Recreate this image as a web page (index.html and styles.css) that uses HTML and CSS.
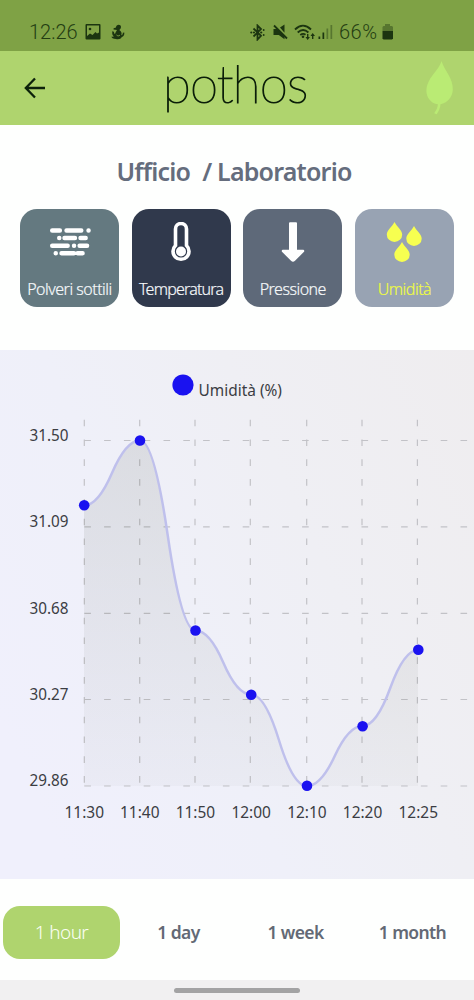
FILE: index.html
```html
<!DOCTYPE html>
<html lang="it">
<head>
    <meta charset="UTF-8">
    <meta name="viewport" content="width=device-width, initial-scale=1.0">
    <title>Pothos</title>
    <link rel="stylesheet" href="styles.css">
</head>
<body>

<div class="status-bar">
    <span class="clock">12:26</span>
    <svg class="icon-picture" width="16" height="16" viewBox="0 0 16 16">
        <path fill-rule="evenodd" d="M1.500 0h13a1 1 0 0 1 1 1v13.500a1 1 0 0 1-1 1h-13a1 1 0 0 1-1-1V1a1 1 0 0 1 1-1zM2 1.500v10.500l3-2.500 2.500 1.500L10.500 8l1.500 1.500L14 8.500V1.500z"/>
        <circle cx="5" cy="5" r="1.300"/>
    </svg>
    <svg class="icon-figure" width="14" height="16" viewBox="0 0 14 16">
        <path d="M5 3.500C5 0 10 0 10 3c0 2-1.600 2.300-1.500 3.200 2 1 2.500 3 1.800 5 1-.2 1.600-1 1.500-2.500l1.500-.2c.3 2.500-.8 4-2.500 4.500C10 15 7.500 15.500 5 15c-3 0-4.500-1-4.500-2.500 1 .3 1.700.2 2.500-.2C1.300 11.500.8 9.500 1.500 7L3 8c0 1 .3 1.700 1 2C4.500 8 5.500 7 6 6L2.500 5.500 2.600 4.300z"/>
        <path class="gap" d="M5.500 11c1.500 1.300 2.500 1 3.500 0"/>
    </svg>
    <div class="status-right">
        <svg width="15" height="17" viewBox="0 0 15 17">
            <path class="line" d="M3.500 4.500l7.500 7.300-3.500 3.700v-14L11 5l-7.500 7.500"/>
            <circle cx="1.300" cy="8.500" r="1.100"/>
            <circle cx="4" cy="8.500" r="1.100"/>
            <circle cx="11.200" cy="8.500" r="1.100"/>
            <circle cx="13.700" cy="6" r=".9"/>
            <circle cx="13.700" cy="11" r=".9"/>
        </svg>
        <svg class="icon-mute" width="15" height="16" viewBox="0 0 15 16">
            <path d="M.5 5h4l7 7v3.300L5.800 11H.5zM7 3.500L11.500.5v8.300z"/>
            <path class="line" d="M1 1.500l13 13"/>
        </svg>
        <svg class="icon-wifi" width="22" height="17" viewBox="0 0 22 17">
            <path class="line" d="M1 5.500c5-5 11-5 16 0M3.700 8.500c3.500-3.300 7.300-3.300 10.700 0M6.300 11c2-1.600 3.500-1.600 5.200-.3"/>
            <circle cx="9" cy="12.700" r="1.300"/>
            <path d="M13 10h1.400v3h1.500L13.700 16l-2.200-3H13zM18 15h1.400v-3H21L18.700 9l-2.200 3H18z"/>
        </svg>
        <svg class="icon-signal" width="15" height="16" viewBox="0 0 15 16">
            <path d="M.5 12.500h1.700V15H.5zM4.500 8.500h1.700V15H4.500z"/>
            <path class="dim" d="M8.500 4.500h1.700V15H8.500zM12.500 1h1.700v14h-1.700z"/>
        </svg>
        <span class="percent">66%</span>
        <svg class="icon-battery" width="12" height="16" viewBox="0 0 12 16">
            <path class="dim" d="M3 0h5v2h2l1 1v4H.5V3l1-1H3z"/>
            <path d="M.5 7H11v7.500l-1 1H1.500l-1-1z"/>
        </svg>
    </div>
</div>

<header class="header">
    <svg class="back" width="22" height="22" viewBox="0 0 22 22">
        <path d="M21 11H2M11 1.500L1.800 11l9.200 9.500"/>
    </svg>
    <h1 class="logo">pothos</h1>
    <svg class="leaf" width="28" height="54" viewBox="0 0 28 54">
        <path d="M15.500 0c2.500 9 12 17 11.300 29-.3 7-5.500 13-12.300 14.200-.2 4-2 7-3.800 10l-2.500-1c2-3 3.500-5.500 3.700-9C4.500 42.500.5 36 .4 30 1 16 12.500 10.500 15.500 0z"/>
    </svg>
</header>

<section class="sensors">
    <h2 class="room"><span>Ufficio</span> <span>/ Laboratorio</span></h2>
    <div class="cards">
        <div class="card dust">
            <svg width="42" height="42" viewBox="0 0 42 42">
                <path class="dust-line" d="M3.200 8.500h7.700M17.500 8.500h14.800M39.500 8.500h.1M10.200 16h.1M15.500 16H26M31.500 16h5.200M3.200 23.800h15.500M25 23.800h.1M30.600 23.800h7.500M6.700 31.200h.1M12.500 31.200H25M28.600 31.200h5"/>
            </svg>
            <span>Polveri sottili</span>
        </div>
        <div class="card temp">
            <svg width="42" height="42" viewBox="0 0 42 42">
                <path class="tube" d="M15.500 7a5.500 5.500 0 0 1 11 0v16.500a8 8 0 1 1-11 0z"/>
                <circle cx="21" cy="29.500" r="5"/>
            </svg>
            <span>Temperatura</span>
        </div>
        <div class="card press">
            <svg width="42" height="42" viewBox="0 0 42 42">
                <path d="M18 .3h6q1 0 1 1v26.500h5.500c2 0 2.300 1.300 1 2.500l-8.500 8.500q-2 2-4 0l-8.500-8.500c-1.300-1.200-1-2.500 1-2.500H17V1.300q0-1 1-1z"/>
            </svg>
            <span>Pressione</span>
        </div>
        <div class="card hum">
            <svg width="42" height="42" viewBox="0 0 42 42">
                <path id="drop" d="M11.500 0C14 5 19.200 8 19.200 12.700a7.700 7.200 0 0 1-15.400 0C3.800 8 9 5 11.500 0z"/>
                <use href="#drop" x="19.500" y="4"/>
                <use href="#drop" x="7.500" y="20"/>
            </svg>
            <span>Umidità</span>
        </div>
    </div>
</section>

<section class="chart">
    <svg width="474" height="529" viewBox="0 350 474 529">
        <defs>
            <linearGradient id="area" x1="0" y1="0" x2="0" y2="1">
                <stop offset="0" stop-color="#101800" stop-opacity=".09"/>
                <stop offset="1" stop-color="#101800" stop-opacity=".025"/>
            </linearGradient>
        </defs>

        <circle class="dot" cx="183" cy="385" r="10.600"/>
        <text x="198.500" y="396" textLength="83.500" lengthAdjust="spacingAndGlyphs">Umidità (%)</text>

        <path class="grid" d="M84.300 440.500H474M84.300 526.800H474M84.300 613.300H474M84.300 699.500H474M84.300 786H474"/>
        <path class="grid" d="M84.300 419.700V786M139.700 419.700V786M195 419.700V786M250.300 419.700V786M306.700 419.700V786M362 419.700V786M417.400 419.700V786"/>

        <path fill="url(#area)" d="M84 505.500Q98 505.500 112 473Q126 440.500 140 440.500Q153.900 440.500 167.750 535.500Q181.600 630.500 195.500 630.500Q209.400 630.500 223.250 662.500Q237.100 694.500 251 694.500Q265 694.500 279 740.250Q293 786 307 786Q320.900 786 334.750 756Q348.600 726 362.500 726Q376.400 726 390.250 688Q404.100 650 418 650V786H84z"/>
        <path class="curve" d="M84 505.500Q98 505.500 112 473Q126 440.500 140 440.500Q153.900 440.500 167.750 535.500Q181.600 630.500 195.500 630.500Q209.400 630.500 223.250 662.500Q237.100 694.500 251 694.500Q265 694.500 279 740.250Q293 786 307 786Q320.900 786 334.750 756Q348.600 726 362.500 726Q376.400 726 390.250 688Q404.100 650 418 650"/>

        <g class="dot">
            <circle cx="84.200" cy="505.300" r="5.300"/>
            <circle cx="140" cy="440.500" r="5.300"/>
            <circle cx="195.500" cy="630.500" r="5.300"/>
            <circle cx="251.200" cy="694.700" r="5.300"/>
            <circle cx="307" cy="785.800" r="5.300"/>
            <circle cx="362.600" cy="726.200" r="5.300"/>
            <circle cx="418.300" cy="649.800" r="5.300"/>
        </g>

        <g>
            <text x="29.500" y="441" textLength="39" lengthAdjust="spacingAndGlyphs">31.50</text>
            <text x="29.500" y="527" textLength="39" lengthAdjust="spacingAndGlyphs">31.09</text>
            <text x="29.500" y="613.500" textLength="39" lengthAdjust="spacingAndGlyphs">30.68</text>
            <text x="29.500" y="700" textLength="39" lengthAdjust="spacingAndGlyphs">30.27</text>
            <text x="29.500" y="786" textLength="39" lengthAdjust="spacingAndGlyphs">29.86</text>
        </g>
        <g>
            <text x="64.500" y="818" textLength="39.500" lengthAdjust="spacingAndGlyphs">11:30</text>
            <text x="120" y="818" textLength="39.500" lengthAdjust="spacingAndGlyphs">11:40</text>
            <text x="175.700" y="818" textLength="39.500" lengthAdjust="spacingAndGlyphs">11:50</text>
            <text x="231.400" y="818" textLength="39.500" lengthAdjust="spacingAndGlyphs">12:00</text>
            <text x="287.200" y="818" textLength="39.500" lengthAdjust="spacingAndGlyphs">12:10</text>
            <text x="342.800" y="818" textLength="39.500" lengthAdjust="spacingAndGlyphs">12:20</text>
            <text x="398.500" y="818" textLength="39.500" lengthAdjust="spacingAndGlyphs">12:25</text>
        </g>
    </svg>
</section>

<nav class="ranges">
    <button class="active">1 hour</button>
    <button>1 day</button>
    <button>1 week</button>
    <button>1 month</button>
</nav>

<div class="gesture-bar"><div class="handle"></div></div>

</body>
</html>
```

FILE: styles.css
```css
* {
    box-sizing: border-box;
}
body {
    margin: 0;
    width: 474px;
    height: 1000px;
    overflow: hidden;
    background-color: #fefffe;
    font-family: "Noto Sans", sans-serif;
}
svg {
    display: block;
    flex: none;
}
.status-bar {
    display: flex;
    align-items: center;
    height: 51px;
    padding: 13px 80px 0 29px;
    background-color: #7fa245;
    color: #233d12;
    fill: #1c3510;
}
.status-bar .line {
    fill: none;
    stroke: #1c3510;
    stroke-width: 1.8;
}
.status-bar .gap {
    fill: none;
    stroke: #7fa245;
}
.status-bar .dim {
    opacity: 0.4;
}
.clock, .percent {
    font-family: Roboto, sans-serif;
    font-weight: 300;
    font-size: 20px;
}
.clock {
    width: 56px;
}
.icon-figure {
    margin-left: 10px;
}
.status-right {
    display: flex;
    align-items: center;
    margin-left: auto;
}
.icon-mute {
    margin-left: 8px;
}
.icon-wifi {
    margin-left: 6px;
}
.icon-signal {
    margin-left: 2px;
}
.percent {
    width: 43px;
    margin-left: 6px;
    letter-spacing: 0.5px;
}
.header {
    display: flex;
    align-items: center;
    justify-content: space-between;
    height: 74px;
    padding: 0 20px 0 24px;
    background-color: #afd46e;
}
.back {
    fill: none;
    stroke: #0d220b;
    stroke-width: 2.3;
}
.logo {
    margin: -9px 0 0 86px;
    width: 146px;
    font-family: Lato, sans-serif;
    font-weight: 100;
    font-size: 51px;
    line-height: 60px;
    letter-spacing: -0.8px;
    color: #0b1e09;
    -webkit-text-stroke: 1.1px #0b1e09;
}
.leaf {
    margin-left: 86px;
    fill: #baeb74;
}
.sensors {
    height: 225px;
    padding: 29px 20px 0;
}
.room {
    display: flex;
    justify-content: center;
    gap: 12px;
    margin: 0 6px 0 0;
    font-size: 25px;
    line-height: 34px;
    font-weight: 600;
    color: #656d7d;
    letter-spacing: -0.8px;
}
.cards {
    display: flex;
    justify-content: space-between;
    margin-top: 21px;
}
.card {
    display: flex;
    flex-direction: column;
    align-items: center;
    width: 99px;
    height: 98px;
    padding-top: 13px;
    border-radius: 17px;
    color: #f5f8fa;
    fill: #fff;
    font-size: 16px;
    font-weight: 300;
    white-space: nowrap;
}
.card span {
    margin-top: 15px;
    line-height: 21px;
    letter-spacing: -0.5px;
    -webkit-text-stroke: 0.2px;
}
.dust {
    background-color: #647980;
}
.temp {
    background-color: #30394c;
}
.temp span {
    letter-spacing: -0.8px;
}
.press {
    background-color: #5e6979;
}
.hum {
    background-color: #98a3b3;
    color: #effb42;
    fill: #f7ff50;
}
.dust-line {
    stroke: #fff;
    stroke-width: 4.4;
    stroke-linecap: round;
}
.tube {
    fill: none;
    stroke: #fff;
    stroke-width: 3.6;
}
.chart {
    height: 529px;
    background: linear-gradient(65deg, #f0f0fc 10%, #eff0f9 40%, #efeff4 65%, #efedef 100%);
}
.chart text {
    font-size: 16px;
    fill: #3b3d43;
}
.grid {
    fill: none;
    stroke: #c2c2c7;
    stroke-width: 1.2;
    stroke-dasharray: 6.6 13.2;
}
.curve {
    fill: none;
    stroke: #bfc0ec;
    stroke-width: 2.5;
}
.dot {
    fill: #1a12f0;
}
.ranges {
    display: flex;
    align-items: center;
    height: 101px;
    padding: 5px 3px 0;
}
.ranges button {
    width: 117px;
    height: 53px;
    padding: 0;
    border: none;
    border-radius: 17px;
    background: none;
    font-family: inherit;
    font-size: 17.5px;
    font-weight: 600;
    letter-spacing: -0.6px;
    color: #636975;
}
.ranges .active {
    background-color: #afd46e;
    color: #fbfff5;
    font-size: 19px;
    font-weight: 300;
}
.gesture-bar {
    height: 20px;
    padding-top: 8px;
    background-color: #f1f0f1;
}
.handle {
    width: 126px;
    height: 5px;
    margin: 0 auto;
    border-radius: 3px;
    background-color: #a3a3a4;
}
```
